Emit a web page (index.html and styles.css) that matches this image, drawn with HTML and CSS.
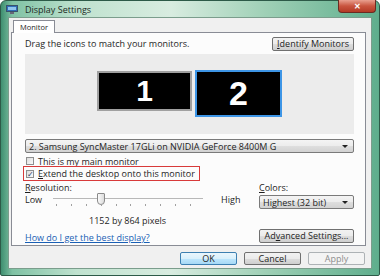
FILE: index.html
```html
<!DOCTYPE html>
<html lang="en">
<head>
    <meta charset="UTF-8">
    <title>Display Settings</title>
    <link rel="stylesheet" href="styles.css">
</head>
<body>
    <div class="window">
        <div class="titlebar">
            <svg class="title-icon" width="12" height="9" viewBox="0 0 12 9">
                <rect x="0.5" y="0.5" width="11" height="6" fill="#2f6fb8" stroke="#39506a"/>
                <rect x="2" y="2" width="8" height="3" fill="#8fc4ee"/>
                <rect x="4" y="7" width="4" height="2" fill="#667"/>
            </svg>
            <span class="title">Display Settings</span>
            <div class="close">&#x2715;</div>
        </div>
        <div class="client">
            <div class="tabs">
                <div class="tab">Monitor</div>
            </div>
            <div class="panel">
                <div class="top-row">
                    <span>Drag the icons to match your monitors.</span>
                    <button class="btn identify"><u>I</u>dentify Monitors</button>
                </div>
                <div class="monitors">
                    <div class="monitor one">1</div>
                    <div class="monitor two">2</div>
                </div>
                <div class="select wide">
                    <span>2. Samsung SyncMaster 17GLi on NVIDIA GeForce 8400M G</span>
                    <span class="arrow"></span>
                </div>
                <div class="check first">
                    <span class="box"></span>
                    <span><u>T</u>his is my main monitor</span>
                </div>
                <div class="check marked">
                    <span class="box">&#x2713;</span>
                    <span><u>E</u>xtend the desktop onto this monitor</span>
                </div>
                <div class="settings">
                    <div class="resolution">
                        <div class="label"><u>R</u>esolution:</div>
                        <div class="slider-row">
                            <span>Low</span>
                            <div class="slider">
                                <div class="track"></div>
                                <div class="thumb"></div>
                                <div class="ticks">
                                    <i></i><i></i><i></i><i></i><i></i><i></i><i></i><i></i><i></i><i></i>
                                </div>
                            </div>
                            <span>High</span>
                        </div>
                        <div class="pixels">1152 by 864 pixels</div>
                    </div>
                    <div class="colors">
                        <div class="label"><u>C</u>olors:</div>
                        <div class="select">
                            <span>Highest (32 bit)</span>
                            <span class="arrow"></span>
                        </div>
                    </div>
                </div>
                <div class="bottom-row">
                    <a href="#">How do I get the best display?</a>
                    <button class="btn advanced">Ad<u>v</u>anced Settings...</button>
                </div>
            </div>
            <div class="buttons">
                <button class="btn ok">OK</button>
                <button class="btn">Cancel</button>
                <button class="btn disabled">Apply</button>
            </div>
        </div>
    </div>
</body>
</html>
```

FILE: styles.css
```css
body {
    margin: 0;
    width: 382px;
    height: 278px;
    background: #ffffff;
    font-family: "Open Sans", "Noto Sans", sans-serif;
    font-size: 9px;
    color: #1e1e1e;
    overflow: hidden;
}
.window {
    width: 380px;
    height: 276px;
    box-sizing: border-box;
    border: 1px solid #2d5a48;
    border-radius: 6px 6px 2px 2px;
    background: linear-gradient(90deg, #3f8f70 0%, #7fc2a4 3%, #bfe2cf 20%, #d8ece0 45%, #9fd0b6 70%, #5fae8d 100%);
    display: flex;
    flex-direction: column;
    padding: 0 7px 6px 7px;
}
.titlebar {
    height: 16px;
    display: flex;
    align-items: center;
    position: relative;
}
.title-icon {
    margin-left: -2px;
}
.title {
    margin-left: 7px;
    font-size: 9px;
    color: #202a24;
}
.close {
    position: absolute;
    right: -4px;
    top: -1px;
    width: 36px;
    height: 12px;
    border: 1px solid #6b2a22;
    border-top: none;
    border-radius: 0 0 4px 4px;
    background: linear-gradient(#e9a08f, #c9553f 50%, #b33a25);
    color: #ffffff;
    font-size: 8px;
    font-weight: bold;
    text-align: center;
    line-height: 12px;
}
.client {
    flex: 1;
    background: #f0f0f0;
    border: 1px solid #7b9d8c;
    padding: 2px 5px 0 2px;
    display: flex;
    flex-direction: column;
}
.tabs {
    display: flex;
    padding-left: 2px;
    height: 12px;
}
.tab {
    background: #ffffff;
    border: 1px solid #898c95;
    border-bottom: none;
    padding: 0 6px;
    font-size: 7.5px;
    line-height: 12px;
    position: relative;
    z-index: 1;
    height: 13px;
    box-sizing: border-box;
}
.panel {
    background: #fcfcfc;
    border: 1px solid #898c95;
    padding: 3px 11px 0 13px;
    height: 214px;
    box-sizing: border-box;
}
.top-row {
    display: flex;
    justify-content: space-between;
    align-items: center;
    height: 15px;
}
.btn {
    font-family: inherit;
    font-size: 9px;
    color: #1e1e1e;
    height: 14px;
    padding: 0;
    border: 1px solid #707070;
    border-radius: 2px;
    background: linear-gradient(#f2f2f2 0%, #ebebeb 50%, #dddddd 51%, #cfcfcf 100%);
    line-height: 12px;
}
.identify {
    width: 82px;
}
.monitors {
    margin-top: 3px;
    height: 80px;
    background: #ececec;
    display: flex;
    justify-content: center;
    align-items: flex-start;
    gap: 3px;
    padding-top: 16px;
    box-sizing: border-box;
}
.monitor {
    background: #000000;
    color: #ffffff;
    font-family: "Liberation Sans", Arial, sans-serif;
    font-weight: bold;
    display: flex;
    justify-content: center;
    align-items: center;
    box-sizing: border-box;
}
.one {
    width: 95px;
    height: 40px;
    margin-top: 1px;
    border: 2px solid #a0a0a0;
    font-size: 30px;
}
.two {
    width: 87px;
    height: 47px;
    border: 2px solid #3d95e6;
    font-size: 34px;
}
.select {
    height: 14px;
    box-sizing: border-box;
    border: 1px solid #7a7a7a;
    border-radius: 2px;
    background: linear-gradient(#f4f4f4 0%, #ececec 50%, #dedede 51%, #d2d2d2 100%);
    display: flex;
    align-items: center;
    justify-content: space-between;
    padding: 0 5px 0 3px;
}
.select.wide {
    margin-top: 5px;
}
.arrow {
    width: 0;
    height: 0;
    border-left: 3px solid transparent;
    border-right: 3px solid transparent;
    border-top: 3px solid #222222;
}
.check {
    display: inline-flex;
    align-items: center;
    gap: 4px;
    height: 10px;
}
.check.first {
    display: flex;
    margin-top: 3px;
    padding-left: 1px;
}
.check.marked {
    border: 1px solid #d83a3a;
    padding: 1px 4px 1px 2px;
    margin-left: -2px;
    height: 15px;
    box-sizing: border-box;
}
.box {
    width: 8px;
    height: 8px;
    box-sizing: border-box;
    border: 1px solid #8e8f8f;
    background: linear-gradient(135deg, #dcdcdc, #fafafa);
    font-size: 8px;
    line-height: 6px;
    color: #2a3f6e;
    text-align: center;
}
.settings {
    margin-top: 2px;
    display: grid;
    grid-template-columns: 1fr 95px;
    column-gap: 18px;
}
.label {
    height: 10px;
    line-height: 10px;
}
.slider-row {
    display: flex;
    align-items: center;
    height: 12px;
    margin-top: 0;
}
.slider {
    position: relative;
    width: 150px;
    height: 12px;
    margin: 0 18px 0 11px;
}
.track {
    position: absolute;
    left: 0;
    right: 0;
    top: 5px;
    height: 1px;
    background: #b8b8b8;
}
.thumb {
    position: absolute;
    left: 44px;
    top: 0;
    width: 6px;
    height: 10px;
    border: 1px solid #8a8a8a;
    border-radius: 1px 1px 4px 4px;
    background: linear-gradient(90deg, #fafafa, #dcdcdc);
}
.ticks {
    position: absolute;
    left: 3px;
    right: 12px;
    top: 11px;
    display: flex;
    justify-content: space-between;
}
.ticks i {
    width: 1px;
    height: 2px;
    background: #a0a0a0;
}
.pixels {
    margin-top: 9px;
    padding-left: 64px;
}
.colors .select {
    margin-top: 2px;
}
.bottom-row {
    margin-top: 0;
    display: flex;
    justify-content: space-between;
    align-items: center;
}
.bottom-row a {
    color: #1a5fb4;
    text-decoration: underline;
    margin-top: 4px;
}
.advanced {
    width: 95px;
}
.buttons {
    display: flex;
    justify-content: flex-end;
    gap: 7px;
    margin-top: 6px;
    padding-right: 1px;
}
.buttons .btn {
    width: 57px;
    height: 13px;
}
.ok {
    border-color: #3c7fb1;
    background: linear-gradient(#eaf6fd 0%, #d9f0fc 50%, #bee6fd 51%, #a7d9f5 100%);
}
.disabled {
    color: #8d8d8d;
    border-color: #adb2b5;
    background: #f4f4f4;
}
```
